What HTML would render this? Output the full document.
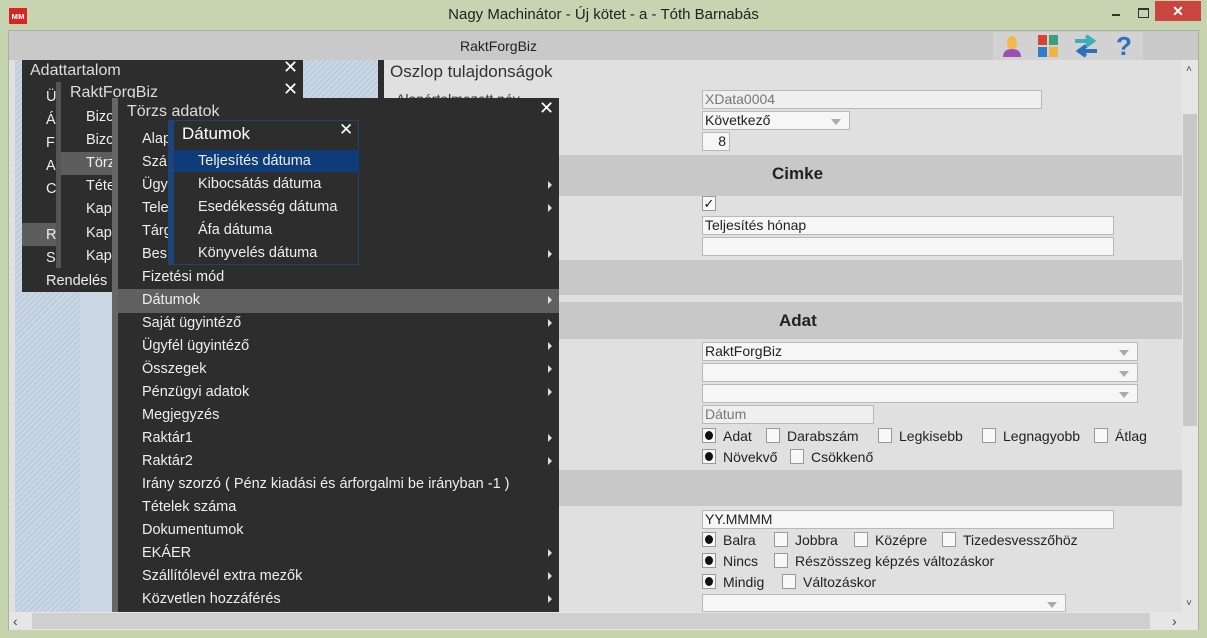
<!DOCTYPE html>
<html><head><meta charset="utf-8"><style>
*{margin:0;padding:0;box-sizing:border-box}
body{width:1207px;height:638px;overflow:hidden;background:#c5d3ae;font-family:"Liberation Sans",Arial,sans-serif;font-size:14px;position:relative}
.a{position:absolute}
.t{position:absolute;white-space:nowrap;line-height:16px}
.dk{background:#2d2d2d;color:#eee}
.inp{position:absolute;background:#f6f6f6;border:1px solid #b8b8b8;height:19px;font-size:14px;line-height:17px;padding-left:2px;color:#222}
.band{position:absolute;left:385px;width:797px;background:#c8c8c8}
.hd{position:absolute;font-weight:bold;font-size:17px;color:#222}
.cb{position:absolute;width:14px;height:15px;border:1px solid #999;background:#f8f8f8}
.rd{position:absolute;width:14px;height:15px;border:1px solid #999;background:#f8f8f8}
.rd:after{content:"";position:absolute;left:2px;top:2px;width:8px;height:9px;border-radius:50%;background:#111}
.lbl{position:absolute;color:#222;font-size:14px;line-height:16px;white-space:nowrap}
.dd:after{content:"";position:absolute;right:8px;top:7px;border:5px solid transparent;border-top:6px solid #aaa}
.ar{position:absolute;left:548px;width:0;height:0;border-top:4px solid transparent;border-bottom:4px solid transparent;border-left:4px solid #ddd}
.mi{position:absolute;left:142px;color:#eee;white-space:nowrap;line-height:16px;font-size:14.5px}
</style></head><body>
<div class="a" style="left:0;top:0;width:1207px;height:30px;background:#c7d4b1"></div>
<div class="a" style="left:9px;top:8px;width:18px;height:16px;background:#d22;color:#fff;font-size:9px;font-weight:bold;line-height:16px;text-align:center">ᴍᴍ</div>
<div class="t" style="left:0;width:1207px;text-align:center;top:7px;font-size:15px;color:#222">Nagy Machinátor - Új kötet - a - Tóth Barnabás</div>
<div class="a" style="left:1112px;top:14px;width:8px;height:2px;background:#333"></div>
<div class="a" style="left:1138px;top:8px;width:11px;height:10px;border:2px solid #333;border-width:2px 1px 1px 1px"></div>
<div class="a" style="left:1155px;top:1px;width:46px;height:20px;background:#c9453f;color:#fff;text-align:center;font-size:14px;line-height:20px;font-weight:bold">✕</div>
<div class="a" style="left:8px;top:30px;width:1191px;height:600px;background:#e0e0e0;border:1px solid #a8b39a"></div>
<div class="a" style="left:9px;top:31px;width:1189px;height:29px;background:#c9c9c9"></div>
<div class="t" style="left:460px;top:38px;font-size:14px;color:#222">RaktForgBiz</div>
<div class="a" style="left:993px;top:32px;width:150px;height:28px;background:#d2d2d2"></div>
<svg class="a" style="left:997px;top:33px" width="30" height="26"><ellipse cx="15" cy="10" rx="5" ry="7" fill="#f1b94c"/><path d="M6 24 Q6 16 15 16 Q24 16 24 24Z" fill="#9a4fb5"/></svg>
<svg class="a" style="left:1034px;top:33px" width="30" height="26"><rect x="4" y="2" width="9" height="10" fill="#d8432f"/><rect x="15" y="2" width="9" height="10" fill="#3aa178"/><rect x="4" y="14" width="9" height="10" fill="#2f7fc7"/><rect x="15" y="14" width="9" height="10" fill="#f0b340"/></svg>
<svg class="a" style="left:1071px;top:33px" width="30" height="26"><path d="M4 8 H20 M15 3 L22 8 L15 13" stroke="#3bb0b8" stroke-width="4" fill="none"/><path d="M26 18 H10 M15 13 L8 18 L15 23" stroke="#2f6fb8" stroke-width="4" fill="none"/></svg>
<div class="t" style="left:1116px;top:32px;font-size:26px;line-height:28px;font-weight:bold;color:#2f6fc0">?</div>
<div class="a" style="left:15px;top:60px;width:363px;height:552px;background:repeating-linear-gradient(135deg,#c9d6e4 0 3px,#b5c5d8 3px 4px)"></div>
<div class="a" style="left:80px;top:60px;width:220px;height:552px;background:#cbd7e3"></div>
<div class="a" style="left:378px;top:60px;width:6px;height:552px;background:#2d2d2d"></div>
<div class="t" style="left:390px;top:63px;font-size:17px;color:#333;line-height:18px">Oszlop tulajdonságok</div>
<div class="t" style="left:396px;top:91px;color:#333">Alapértelmezett név</div>
<div class="inp" style="left:702px;top:90px;width:340px;color:#777;background:#efefef">XData0004</div>
<div class="inp dd" style="left:702px;top:111px;width:148px">Következő</div>
<div class="inp" style="left:702px;top:132px;width:28px;text-align:right;padding-right:3px">8</div>
<div class="band" style="top:155px;height:41px"></div><div class="hd" style="left:772px;top:164px">Cimke</div>
<div class="cb" style="left:702px;top:196px;font-size:13px;line-height:13px;text-align:center;color:#111">✓</div>
<div class="inp" style="left:702px;top:216px;width:412px">Teljesítés hónap</div>
<div class="inp" style="left:702px;top:237px;width:412px"></div>
<div class="band" style="top:260px;height:35px"></div>
<div class="band" style="top:302px;height:37px"></div><div class="hd" style="left:779px;top:311px">Adat</div>
<div class="inp dd" style="left:702px;top:342px;width:436px">RaktForgBiz</div>
<div class="inp dd" style="left:702px;top:363px;width:436px"></div>
<div class="inp dd" style="left:702px;top:384px;width:436px"></div>
<div class="inp" style="left:702px;top:405px;width:172px;color:#777;background:#efefef">Dátum</div>
<div class="rd" style="left:702px;top:428px"></div><div class="lbl" style="left:723px;top:428px">Adat</div>
<div class="cb" style="left:766px;top:428px"></div><div class="lbl" style="left:787px;top:428px">Darabszám</div>
<div class="cb" style="left:878px;top:428px"></div><div class="lbl" style="left:899px;top:428px">Legkisebb</div>
<div class="cb" style="left:982px;top:428px"></div><div class="lbl" style="left:1003px;top:428px">Legnagyobb</div>
<div class="cb" style="left:1094px;top:428px"></div><div class="lbl" style="left:1115px;top:428px">Átlag</div>
<div class="rd" style="left:702px;top:449px"></div><div class="lbl" style="left:723px;top:449px">Növekvő</div>
<div class="cb" style="left:790px;top:449px"></div><div class="lbl" style="left:811px;top:449px">Csökkenő</div>
<div class="band" style="top:470px;height:36px"></div>
<div class="inp" style="left:702px;top:510px;width:412px">YY.MMMM</div>
<div class="rd" style="left:702px;top:532px"></div><div class="lbl" style="left:723px;top:532px">Balra</div>
<div class="cb" style="left:774px;top:532px"></div><div class="lbl" style="left:795px;top:532px">Jobbra</div>
<div class="cb" style="left:854px;top:532px"></div><div class="lbl" style="left:875px;top:532px">Középre</div>
<div class="cb" style="left:942px;top:532px"></div><div class="lbl" style="left:963px;top:532px">Tizedesvesszőhöz</div>
<div class="rd" style="left:702px;top:553px"></div><div class="lbl" style="left:723px;top:553px">Nincs</div>
<div class="cb" style="left:774px;top:553px"></div><div class="lbl" style="left:795px;top:553px">Részösszeg képzés változáskor</div>
<div class="rd" style="left:702px;top:574px"></div><div class="lbl" style="left:723px;top:574px">Mindig</div>
<div class="cb" style="left:782px;top:574px"></div><div class="lbl" style="left:803px;top:574px">Változáskor</div>
<div class="inp dd" style="left:702px;top:594px;width:364px;height:18px"></div>
<div class="a" style="left:1182px;top:60px;width:16px;height:552px;background:#e6e6e6"></div>
<div class="a" style="left:1183px;top:114px;width:14px;height:312px;background:#c8c8c8"></div>
<div class="t" style="left:1186px;top:62px;font-size:10px;color:#444">˄</div>
<div class="t" style="left:1186px;top:596px;font-size:10px;color:#444">˅</div>
<div class="a" style="left:9px;top:612px;width:1189px;height:18px;background:#e6e6e6"></div>
<div class="a" style="left:32px;top:613px;width:1118px;height:16px;background:#cfcfcf"></div>
<div class="t" style="left:13px;top:613px;font-size:14px;color:#444">‹</div>
<div class="t" style="left:1172px;top:613px;font-size:14px;color:#444">›</div>
<div class="a dk" style="left:22px;top:60px;width:281px;height:232px"></div>
<div class="t" style="left:30px;top:62px;font-size:16px;color:#ddd;line-height:18px">Adattartalom</div>
<div class="t" style="left:283px;top:59px;font-size:18px;color:#fff">✕</div>
<div class="mi" style="left:46px;top:89px">Ü</div><div class="mi" style="left:46px;top:112px">Á</div><div class="mi" style="left:46px;top:135px">F</div><div class="mi" style="left:46px;top:158px">A</div><div class="mi" style="left:46px;top:181px">C</div>
<div class="a" style="left:22px;top:243px;width:281px;height:1px;background:#2b5a9a"></div>
<div class="a" style="left:22px;top:223px;width:90px;height:23px;background:#5d5d5d"></div>
<div class="mi" style="left:46px;top:227px">R</div><div class="mi" style="left:46px;top:250px">S</div><div class="mi" style="left:46px;top:273px">Rendelés</div>
<div class="a dk" style="left:56px;top:82px;width:247px;height:186px;border-left:5px solid #555"></div>
<div class="t" style="left:70px;top:84px;font-size:16px;color:#ddd;line-height:18px">RaktForgBiz</div>
<div class="t" style="left:283px;top:81px;font-size:18px;color:#fff">✕</div>
<div class="mi" style="left:86px;top:109px">Bizo</div><div class="mi" style="left:86px;top:132px">Bizo</div>
<div class="a" style="left:61px;top:152px;width:60px;height:23px;background:#5d5d5d"></div>
<div class="mi" style="left:86px;top:155px">Törz</div><div class="mi" style="left:86px;top:178px">Téte</div><div class="mi" style="left:86px;top:201px">Kap</div><div class="mi" style="left:86px;top:225px">Kap</div><div class="mi" style="left:86px;top:248px">Kap</div>
<div class="a dk" style="left:112px;top:98px;width:447px;height:514px;border-left:6px solid #666"></div>
<div class="t" style="left:127px;top:103px;font-size:16px;color:#ddd;line-height:18px">Törzs adatok</div>
<div class="t" style="left:539px;top:100px;font-size:18px;color:#fff">✕</div>
<div class="mi" style="top:131px">Alap</div><div class="mi" style="top:154px">Szá</div><div class="mi" style="top:177px">Ügy</div><div class="mi" style="top:200px">Tele</div><div class="mi" style="top:223px">Tárg</div><div class="mi" style="top:246px">Bes</div>
<div class="mi" style="top:269px">Fizetési mód</div>
<div class="a" style="left:118px;top:289px;width:441px;height:24px;background:#606060"></div>
<div class="mi" style="top:292px">Dátumok</div>
<div class="mi" style="top:315px">Saját ügyintéző</div><div class="mi" style="top:338px">Ügyfél ügyintéző</div><div class="mi" style="top:361px">Összegek</div><div class="mi" style="top:384px">Pénzügyi adatok</div><div class="mi" style="top:407px">Megjegyzés</div><div class="mi" style="top:430px">Raktár1</div><div class="mi" style="top:453px">Raktár2</div><div class="mi" style="top:476px">Irány szorzó ( Pénz kiadási és árforgalmi be irányban -1 )</div><div class="mi" style="top:499px">Tételek száma</div><div class="mi" style="top:522px">Dokumentumok</div><div class="mi" style="top:545px">EKÁER</div><div class="mi" style="top:568px">Szállítólevél extra mezők</div><div class="mi" style="top:591px">Közvetlen hozzáférés</div>
<div class="ar" style="top:181px"></div><div class="ar" style="top:204px"></div><div class="ar" style="top:250px"></div><div class="ar" style="top:296px"></div><div class="ar" style="top:319px"></div><div class="ar" style="top:342px"></div><div class="ar" style="top:365px"></div><div class="ar" style="top:388px"></div><div class="ar" style="top:434px"></div><div class="ar" style="top:457px"></div><div class="ar" style="top:549px"></div><div class="ar" style="top:572px"></div><div class="ar" style="top:595px"></div>
<div class="a dk" style="left:168px;top:120px;width:191px;height:145px;border:1px solid #1d4379;border-left:6px solid #1d4379"></div>
<div class="t" style="left:182px;top:124px;font-size:17px;color:#fff;line-height:19px">Dátumok</div>
<div class="t" style="left:339px;top:122px;font-size:17px;color:#fff">✕</div>
<div class="a" style="left:174px;top:150px;width:185px;height:22px;background:#0d3c78"></div>
<div class="mi" style="left:198px;top:153px">Teljesítés dátuma</div><div class="mi" style="left:198px;top:176px">Kibocsátás dátuma</div><div class="mi" style="left:198px;top:199px">Esedékesség dátuma</div><div class="mi" style="left:198px;top:222px">Áfa dátuma</div><div class="mi" style="left:198px;top:245px">Könyvelés dátuma</div>
</body></html>
